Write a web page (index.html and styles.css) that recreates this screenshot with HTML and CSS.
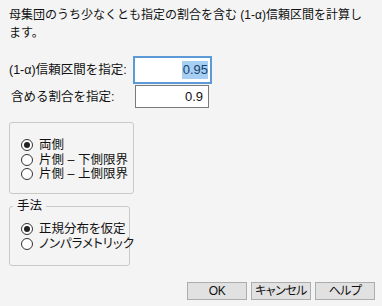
FILE: index.html
```html
<!DOCTYPE html>
<html lang="ja">
<head>
    <meta charset="UTF-8">
    <title>許容区間</title>
    <link rel="stylesheet" href="styles.css">
</head>
<body>
    <p class="desc">母集団のうち少なくとも指定の割合を含む (1-α)信頼区間を計算し<br>ます。</p>

    <div class="form">
        <label class="lbl">(1-α)信頼区間を指定:</label>
        <div class="field focus"><span class="sel">0.95</span></div>
        <label class="lbl lbl2">含める割合を指定:</label>
        <div class="field field2">0.9</div>
    </div>

    <div class="group group1">
        <div class="opt"><span class="radio on"></span>両側</div>
        <div class="opt"><span class="radio"></span>片側 – 下側限界</div>
        <div class="opt"><span class="radio"></span>片側 – 上側限界</div>
    </div>

    <fieldset class="group group2">
        <legend>手法</legend>
        <div class="opt"><span class="radio on"></span>正規分布を仮定</div>
        <div class="opt"><span class="radio"></span>ノンパラメトリック</div>
    </fieldset>

    <div class="buttons">
        <button type="button">OK</button>
        <button type="button">キャンセル</button>
        <button type="button">ヘルプ</button>
    </div>
</body>
</html>
```

FILE: styles.css
```css
* {
    box-sizing: border-box;
}

body {
    margin: 0;
    width: 382px;
    height: 306px;
    overflow: hidden;
    background-color: #f4f4f4;
    color: #111;
    font-family: "Liberation Sans", "Noto Sans CJK JP", sans-serif;
    font-size: 12px;
}

.desc {
    margin: 0;
    padding: 6px 9px 0;
    line-height: 18px;
    white-space: nowrap;
}

.form {
    display: grid;
    grid-template-columns: 124px 80px;
    grid-template-rows: 28px 23px;
    row-gap: 1px;
    align-items: center;
    margin-top: 14px;
    padding-left: 9px;
}

.lbl {
    line-height: 16px;
    font-size: 12.5px;
}

.lbl2 {
    padding-left: 2px;
}

.field {
    height: 23px;
    width: 74px;
    margin-left: 2px;
    border: 1px solid #7a7a7a;
    background-color: #fff;
    font-size: 13px;
    line-height: 21px;
    text-align: right;
    padding-right: 5px;
}

.field.focus {
    height: 28px;
    width: 79px;
    margin-left: 0;
    border: 2px solid #5b9ad6;
    line-height: 24px;
    padding-right: 2px;
}

.sel {
    background-color: #a6cff3;
    color: #1a3f6b;
    padding: 1px 0 2px 1px;
}

.group {
    margin: 0;
    border: 1px solid #c9c9c9;
    border-radius: 3px;
}

.group1 {
    margin: 14px 0 0 9px;
    width: 125px;
    height: 72px;
    padding: 15px 0 0 11px;
}

.group2 {
    margin: 5px 0 0 9px;
    width: 121px;
    padding: 9px 0 14px 11px;
    min-inline-size: 0;
}

.group2 legend {
    margin-left: -8px;
    padding: 0 4px;
    line-height: 14px;
    font-size: 12.5px;
}

.opt {
    display: flex;
    align-items: center;
    height: 14.5px;
    line-height: 14px;
    white-space: nowrap;
    font-size: 12.5px;
    font-feature-settings: "palt";
}

.radio {
    width: 12px;
    height: 12px;
    margin-right: 6px;
    border: 1px solid #333;
    border-radius: 50%;
    background-color: #fff;
    display: flex;
    align-items: center;
    justify-content: center;
    flex: none;
}

.radio.on::after {
    content: "";
    width: 6px;
    height: 6px;
    border-radius: 50%;
    background-color: #222;
}

.buttons {
    display: flex;
    justify-content: flex-end;
    gap: 4px;
    margin-top: 16px;
    padding-right: 7px;
}

button {
    width: 60px;
    height: 18px;
    padding: 0;
    border: 1px solid #adadad;
    background-color: #e1e1e1;
    color: #111;
    font-family: "Liberation Sans", "Noto Sans CJK JP", sans-serif;
    font-size: 12px;
    line-height: 16px;
    font-feature-settings: "palt";
    letter-spacing: -0.5px;
}
```
